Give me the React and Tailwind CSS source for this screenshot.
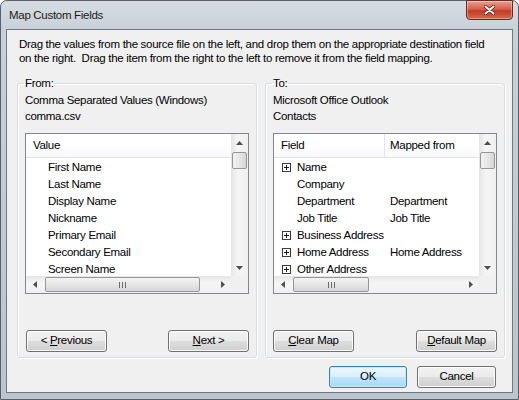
import React from "react";

const leftItems = [
  "First Name",
  "Last Name",
  "Display Name",
  "Nickname",
  "Primary Email",
  "Secondary Email",
  "Screen Name",
];

const rightItems = [
  { field: "Name", from: "", plus: true },
  { field: "Company", from: "" },
  { field: "Department", from: "Department" },
  { field: "Job Title", from: "Job Title" },
  { field: "Business Address", from: "", plus: true },
  { field: "Home Address", from: "Home Address", plus: true },
  { field: "Other Address", from: "", plus: true },
];

function Arrow({ dir }) {
  const d = {
    up: "M0 4 L3.5 0 L7 4 Z",
    down: "M0 0 L7 0 L3.5 4 Z",
    left: "M4 0 L4 7 L0 3.5 Z",
    right: "M0 0 L4 3.5 L0 7 Z",
  }[dir];
  const vertical = dir === "up" || dir === "down";
  return (
    <svg
      width={vertical ? 7 : 4}
      height={vertical ? 4 : 7}
      viewBox={vertical ? "0 0 7 4" : "0 0 4 7"}
    >
      <path d={d} fill="#4d4d4d" />
    </svg>
  );
}

function PlusBox() {
  return (
    <svg width="9" height="9" viewBox="0 0 9 9" className="shrink-0">
      <rect x="0.5" y="0.5" width="8" height="8" fill="#fff" stroke="#3c3c3c" />
      <path d="M2 4.5 H7 M4.5 2 V7" stroke="#1a1a1a" />
    </svg>
  );
}

function Grip() {
  return (
    <svg width="7" height="6" viewBox="0 0 7 6">
      <path d="M0.5 0 V6 M3.5 0 V6 M6.5 0 V6" stroke="#6b6b6b" />
    </svg>
  );
}

function VScroll() {
  return (
    <div className="flex flex-col w-[17px] bg-[linear-gradient(to_right,#e6e6e6,#f5f5f5_40%,#f0f0f0)]">
      <div className="h-[17px] flex items-center justify-center">
        <Arrow dir="up" />
      </div>
      <div className="mx-[1px] mt-[1px] h-[17px] rounded-[2px] border border-[#979797] bg-[linear-gradient(to_right,#f3f3f3,#e6e6e6_50%,#d6d6d6)]" />
      <div className="flex-1" />
      <div className="h-[17px] flex items-center justify-center">
        <Arrow dir="down" />
      </div>
    </div>
  );
}

function HScroll({ thumbWidth }) {
  return (
    <div className="flex h-[17px] bg-[linear-gradient(to_bottom,#e6e6e6,#f5f5f5_40%,#f0f0f0)]">
      <div className="w-[17px] flex items-center justify-center">
        <Arrow dir="left" />
      </div>
      <div
        className="ml-[2px] my-[1px] rounded-[2px] border border-[#979797] bg-[linear-gradient(to_bottom,#f3f3f3,#e6e6e6_50%,#d6d6d6)] flex items-center justify-center"
        style={{ width: thumbWidth }}
      >
        <Grip />
      </div>
      <div className="flex-1" />
      <div className="w-[17px] flex items-center justify-center">
        <Arrow dir="right" />
      </div>
    </div>
  );
}

function ListBox({ header, children, thumbWidth }) {
  return (
    <div className="border border-[#828790] bg-white grid grid-cols-[1fr_17px] grid-rows-[142px_17px] h-[161px]">
      <div className="overflow-hidden">
        <div className="h-[24px] flex items-center border-b border-[#e5e5e5] bg-[linear-gradient(to_bottom,#ffffff,#ffffff_50%,#f7f8f9)]">
          {header}
        </div>
        <div className="pt-[1px]">{children}</div>
      </div>
      <VScroll />
      <HScroll thumbWidth={thumbWidth} />
      <div className="bg-[#f0f0f0]" />
    </div>
  );
}

function Button({ children, primary, className = "" }) {
  return (
    <button
      className={
        "h-[22px] rounded-[3px] border leading-none text-[#000] " +
        (primary
          ? "border-[#3c7fb1] bg-[linear-gradient(to_bottom,#eaf6fd,#d9f0fc_50%,#bee6fd_51%,#a7d9f5)] shadow-[inset_0_0_0_1px_#cbe8f8] "
          : "border-[#707070] bg-[linear-gradient(to_bottom,#f2f2f2,#ebebeb_50%,#dddddd_51%,#cfcfcf)] shadow-[inset_0_0_0_1px_#fcfcfc] ") +
        className
      }
    >
      {children}
    </button>
  );
}

function GroupBox({ legend, children }) {
  return (
    <fieldset className="border border-[#d5dfe5] rounded-[3px] px-[7px] pb-[5px] shadow-[inset_1px_1px_0_#fff,1px_1px_0_#fff]">
      <legend className="px-[1px] -ml-[1px] leading-[15px]">{legend}</legend>
      {children}
    </fieldset>
  );
}

export default function App() {
  return (
    <div className="w-[519px] h-[400px] overflow-hidden bg-white font-['Segoe_UI','Liberation_Sans',sans-serif] text-[11.5px] tracking-[-0.3px] text-[#000]">
      <div className="w-full h-full flex flex-col rounded-t-[7px] border border-[#58616b] bg-[linear-gradient(to_bottom,#d6dce2,#c9d0d7_30px,#bcc4cc)]">
        {/* TITLE BAR */}
        <div className="h-[28px] flex items-start justify-between shrink-0">
          <span className="ml-[8px] mt-[7px] leading-[15px] text-[#1a1a1a]">
            Map Custom Fields
          </span>
          <div className="mr-[5px] -mt-[1px] w-[47px] h-[20px] rounded-b-[4px] border border-[#6b2a1f] bg-[linear-gradient(to_bottom,#e8a091,#d7604a_45%,#c23d25_55%,#d46a4c)] flex items-center justify-center shadow-[inset_0_0_0_1px_rgba(255,255,255,0.35)]">
            <svg width="11" height="10" viewBox="0 0 11 10">
              <path
                d="M1.5 1.5 L9.5 8.5 M9.5 1.5 L1.5 8.5"
                stroke="#5a1c12"
                strokeWidth="3.6"
                strokeLinecap="round"
              />
              <path
                d="M1.5 1.5 L9.5 8.5 M9.5 1.5 L1.5 8.5"
                stroke="#fff"
                strokeWidth="2"
                strokeLinecap="round"
              />
            </svg>
          </div>
        </div>

        {/* CLIENT AREA */}
        <div className="mx-[5px] mb-[6px] flex-1 border border-[#6d7884] bg-[#f0f0f0] flex flex-col">
          <p className="pt-[7px] pl-[12px] pr-[20px] leading-[14px]">
            Drag the values from the source file on the left, and drop them on the appropriate destination field on the right.&nbsp; Drag the item from the right to the left to remove it from the field mapping.
          </p>

          <div className="mt-[11px] pl-[10px] pr-[7px] grid grid-cols-2 gap-[8px]">
            <GroupBox legend="From:">
              <div className="mt-[1px] leading-[16px]">
                <div>Comma Separated Values (Windows)</div>
                <div>comma.csv</div>
              </div>
              <div className="mt-[9px]">
                <ListBox
                  thumbWidth={155}
                  header={<span className="pl-[7px]">Value</span>}
                >
                  {leftItems.map((item) => (
                    <div key={item} className="h-[17px] leading-[17px] pl-[22px]">
                      {item}
                    </div>
                  ))}
                </ListBox>
              </div>
              <div className="mt-[36px] flex justify-between pl-[1px]">
                <Button className="w-[81px]">
                  &lt; <span className="underline">P</span>revious
                </Button>
                <Button className="w-[81px]">
                  <span className="underline">N</span>ext &gt;
                </Button>
              </div>
            </GroupBox>

            <GroupBox legend="To:">
              <div className="mt-[1px] leading-[16px]">
                <div>Microsoft Office Outlook</div>
                <div>Contacts</div>
              </div>
              <div className="mt-[9px]">
                <ListBox
                  thumbWidth={76}
                  header={
                    <div className="flex h-full items-center w-full">
                      <span className="w-[111px] pl-[7px] border-r border-[#e5e5e5] h-full flex items-center">
                        Field
                      </span>
                      <span className="pl-[5px]">Mapped from</span>
                    </div>
                  }
                >
                  {rightItems.map((item) => (
                    <div key={item.field} className="h-[17px] flex items-center">
                      <div className="w-[111px] flex items-center pl-[8px] gap-[6px]">
                        {item.plus ? <PlusBox /> : <span className="w-[9px] shrink-0" />}
                        <span className="whitespace-nowrap">{item.field}</span>
                      </div>
                      <span className="pl-[5px] whitespace-nowrap">{item.from}</span>
                    </div>
                  ))}
                </ListBox>
              </div>
              <div className="mt-[36px] flex justify-between">
                <Button className="w-[81px]">
                  <span className="underline">C</span>lear Map
                </Button>
                <Button className="w-[81px]">
                  <span className="underline">D</span>efault Map
                </Button>
              </div>
            </GroupBox>
          </div>

          <div className="mt-[8px] flex justify-end gap-[10px] pr-[16px]">
            <Button primary className="w-[78px] h-[21px]">
              OK
            </Button>
            <Button className="w-[79px] h-[21px]">Cancel</Button>
          </div>
        </div>
      </div>
    </div>
  );
}
